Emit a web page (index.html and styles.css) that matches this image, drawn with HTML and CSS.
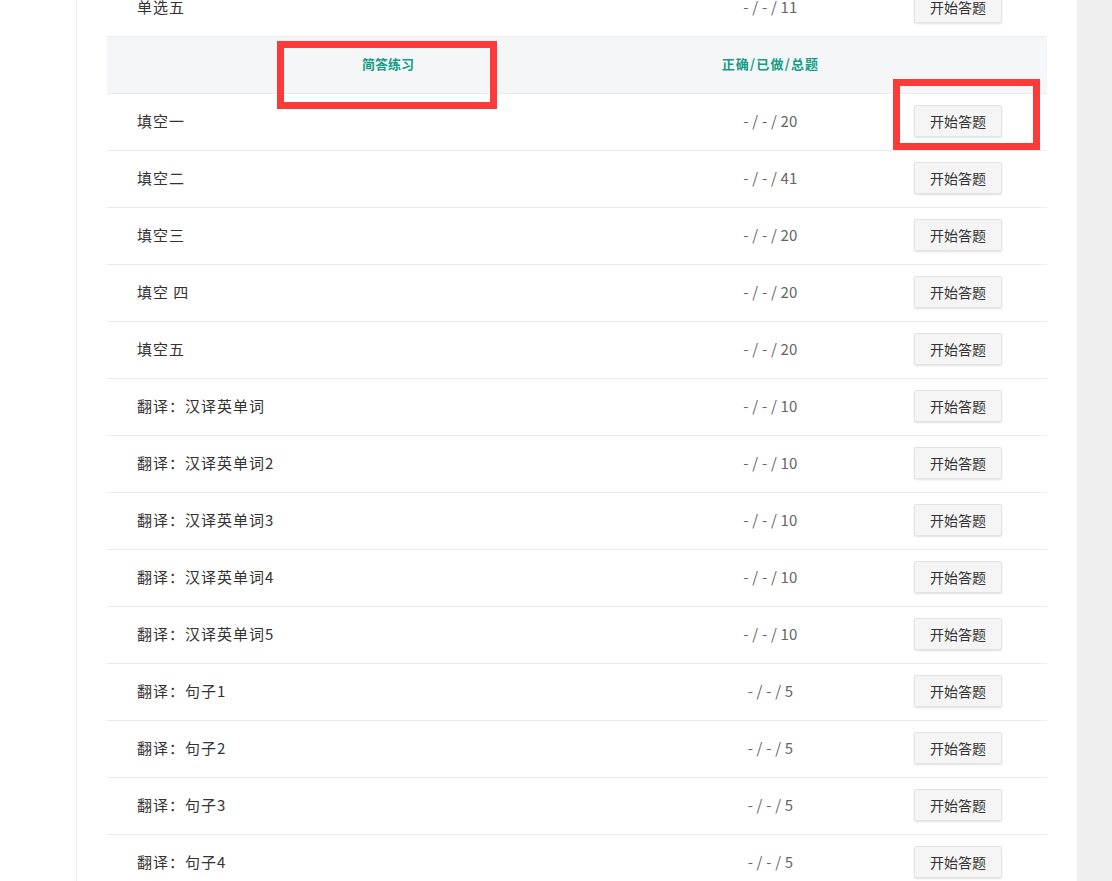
FILE: index.html
```html
<!DOCTYPE html>
<html lang="zh-CN">
<head>
<meta charset="utf-8">
<title>练习列表</title>
<link rel="stylesheet" href="styles.css">
</head>
<body>
<div class="page">
  <div class="gutter"></div>
  <main class="main">
    <div class="table">
      <div class="row"><div class="name">单选五</div><div class="count">- / - / 11</div><div class="act"><button class="btn">开始答题</button></div></div>
      <div class="row head"><div class="hname">简答练习</div><div class="hcount">正确/已做/总题</div><div></div></div>
      <div class="row"><div class="name">填空一</div><div class="count">- / - / 20</div><div class="act"><button class="btn">开始答题</button></div></div>
      <div class="row"><div class="name">填空二</div><div class="count">- / - / 41</div><div class="act"><button class="btn">开始答题</button></div></div>
      <div class="row"><div class="name">填空三</div><div class="count">- / - / 20</div><div class="act"><button class="btn">开始答题</button></div></div>
      <div class="row"><div class="name">填空 四</div><div class="count">- / - / 20</div><div class="act"><button class="btn">开始答题</button></div></div>
      <div class="row"><div class="name">填空五</div><div class="count">- / - / 20</div><div class="act"><button class="btn">开始答题</button></div></div>
      <div class="row"><div class="name">翻译<span class="colon">：</span>汉译英单词</div><div class="count">- / - / 10</div><div class="act"><button class="btn">开始答题</button></div></div>
      <div class="row"><div class="name">翻译<span class="colon">：</span>汉译英单词2</div><div class="count">- / - / 10</div><div class="act"><button class="btn">开始答题</button></div></div>
      <div class="row"><div class="name">翻译<span class="colon">：</span>汉译英单词3</div><div class="count">- / - / 10</div><div class="act"><button class="btn">开始答题</button></div></div>
      <div class="row"><div class="name">翻译<span class="colon">：</span>汉译英单词4</div><div class="count">- / - / 10</div><div class="act"><button class="btn">开始答题</button></div></div>
      <div class="row"><div class="name">翻译<span class="colon">：</span>汉译英单词5</div><div class="count">- / - / 10</div><div class="act"><button class="btn">开始答题</button></div></div>
      <div class="row"><div class="name">翻译<span class="colon">：</span>句子1</div><div class="count">- / - / 5</div><div class="act"><button class="btn">开始答题</button></div></div>
      <div class="row"><div class="name">翻译<span class="colon">：</span>句子2</div><div class="count">- / - / 5</div><div class="act"><button class="btn">开始答题</button></div></div>
      <div class="row"><div class="name">翻译<span class="colon">：</span>句子3</div><div class="count">- / - / 5</div><div class="act"><button class="btn">开始答题</button></div></div>
      <div class="row"><div class="name">翻译<span class="colon">：</span>句子4</div><div class="count">- / - / 5</div><div class="act"><button class="btn">开始答题</button></div></div>
    </div>
  </main>
  <div class="side"></div>
</div>
<div class="mark mark-head"></div>
<div class="mark mark-btn"></div>
</body>
</html>
```

FILE: styles.css
```css
html, body {
  margin: 0;
  padding: 0;
  height: 100%;
  overflow: hidden;
  background: #fff;
  font-family: "Noto Sans CJK SC", "Noto Sans", sans-serif;
  color: #333;
}

.page {
  display: flex;
  height: 881px;
}

.gutter {
  width: 76px;
  flex: none;
  background: #fff;
}

.main {
  flex: none;
  width: 940px;
  padding: 0 30px;
  border-left: 1px solid #ececec;
  background: #fff;
}

.side {
  flex: 1;
  background: #efefef;
}

.table {
  margin-top: -20px;
}

.row {
  display: grid;
  grid-template-columns: 562px 201px 177px;
  height: 54px;
  padding-bottom: 2px;
  border-bottom: 1px solid #ececec;
  align-items: center;
}

.name {
  padding-left: 30px;
  font-size: 15px;
  letter-spacing: 1px;
  line-height: 20px;
  color: #333;
}

.colon {
  font-family: "Noto Sans CJK TC", "Noto Sans CJK SC", sans-serif;
}

.count {
  text-align: center;
  font-size: 15px;
  line-height: 20px;
  color: #666;
  letter-spacing: 0.2px;
  padding-left: 2px;
}

.act {
  display: flex;
  justify-content: flex-start;
  padding-left: 44px;
}

.btn {
  width: 88px;
  height: 32px;
  padding: 0;
  background: #f5f5f5;
  border: 1px solid #e3e3e3;
  border-radius: 2px;
  box-shadow: 0 1px 2px rgba(0, 0, 0, 0.12);
  font-family: "Noto Sans CJK SC", sans-serif;
  font-size: 14px;
  color: #333;
  cursor: pointer;
}

.head {
  background: #f5f6f8;
}

.hname, .hcount {
  text-align: center;
  font-size: 13px;
  font-weight: bold;
  line-height: 20px;
  color: #149c86;
}

.hcount {
  letter-spacing: 1.2px;
  padding-left: 2px;
}

.mark {
  position: absolute;
  border: 7px solid #fc3a3a;
  box-sizing: border-box;
}

.mark-head {
  left: 277px;
  top: 41px;
  width: 220px;
  height: 68px;
}

.mark-btn {
  left: 893px;
  top: 79px;
  width: 147px;
  height: 71px;
}
```
